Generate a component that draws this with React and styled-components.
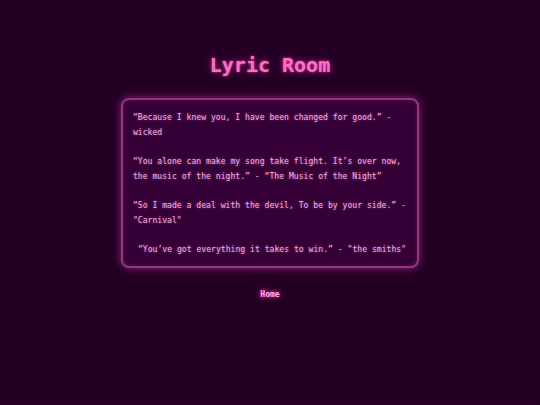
import React from "react";
import styled, { createGlobalStyle } from "styled-components";

const Global = createGlobalStyle`
  html, body {
    margin: 0;
    padding: 0;
    background-color: #1e0020;
    background-image:
      linear-gradient(rgba(120, 0, 110, 0.07) 1px, transparent 1px),
      linear-gradient(90deg, rgba(120, 0, 110, 0.07) 1px, transparent 1px);
    background-size: 4px 4px;
    min-height: 405px;
    font-family: "DejaVu Sans Mono", "Liberation Mono", monospace;
  }
`;

const Page = styled.main`
  display: flex;
  flex-direction: column;
  align-items: center;
  padding-top: 51px;
`;

const Title = styled.h1`
  margin: 0;
  font-size: 20px;
  line-height: 28px;
  font-weight: bold;
  color: #f872c4;
  text-shadow: 0 0 3px rgba(255, 60, 180, 0.8), 0 0 8px rgba(255, 60, 180, 0.5);
`;

const Card = styled.section`
  margin-top: 19px;
  width: 274px;
  padding: 10px 10px 9px;
  background: #340035;
  border: 2px solid #8e3684;
  border-radius: 8px;
  box-shadow: 0 0 8px rgba(255, 80, 200, 0.5), inset 0 0 5px rgba(255, 80, 200, 0.2);
`;

const Quote = styled.p`
  margin: 0;
  font-size: 8.1px;
  line-height: 14.5px;
  color: #efaee0;
  text-shadow: 0 0 3px rgba(255, 110, 200, 0.6);
  padding-left: ${(p) => (p.$indent ? "5px" : "0")};
  & + & {
    margin-top: 15px;
  }
`;

const NavLink = styled.a`
  margin-top: 20px;
  font-size: 8px;
  font-weight: bold;
  line-height: 14px;
  color: #ffb0e4;
  text-decoration: none;
  text-shadow: 0 0 4px #ff3cb4, 0 0 8px rgba(255, 60, 180, 0.6);
`;

export default function App() {
  return (
    <>
      <Global />
      <Page>
        <Title>Lyric Room</Title>
        <Card>
          <Quote>“Because I knew you, I have been changed for good.” - wicked</Quote>
          <Quote>
            “You alone can make my song take flight. It’s over now, the music of the night.” - “The Music of the Night”
          </Quote>
          <Quote>“So I made a deal with the devil, To be by your side.” - "Carnival"</Quote>
          <Quote $indent>“You’ve got everything it takes to win.” - "the smiths"</Quote>
        </Card>
        <NavLink href="#">Home</NavLink>
      </Page>
    </>
  );
}
